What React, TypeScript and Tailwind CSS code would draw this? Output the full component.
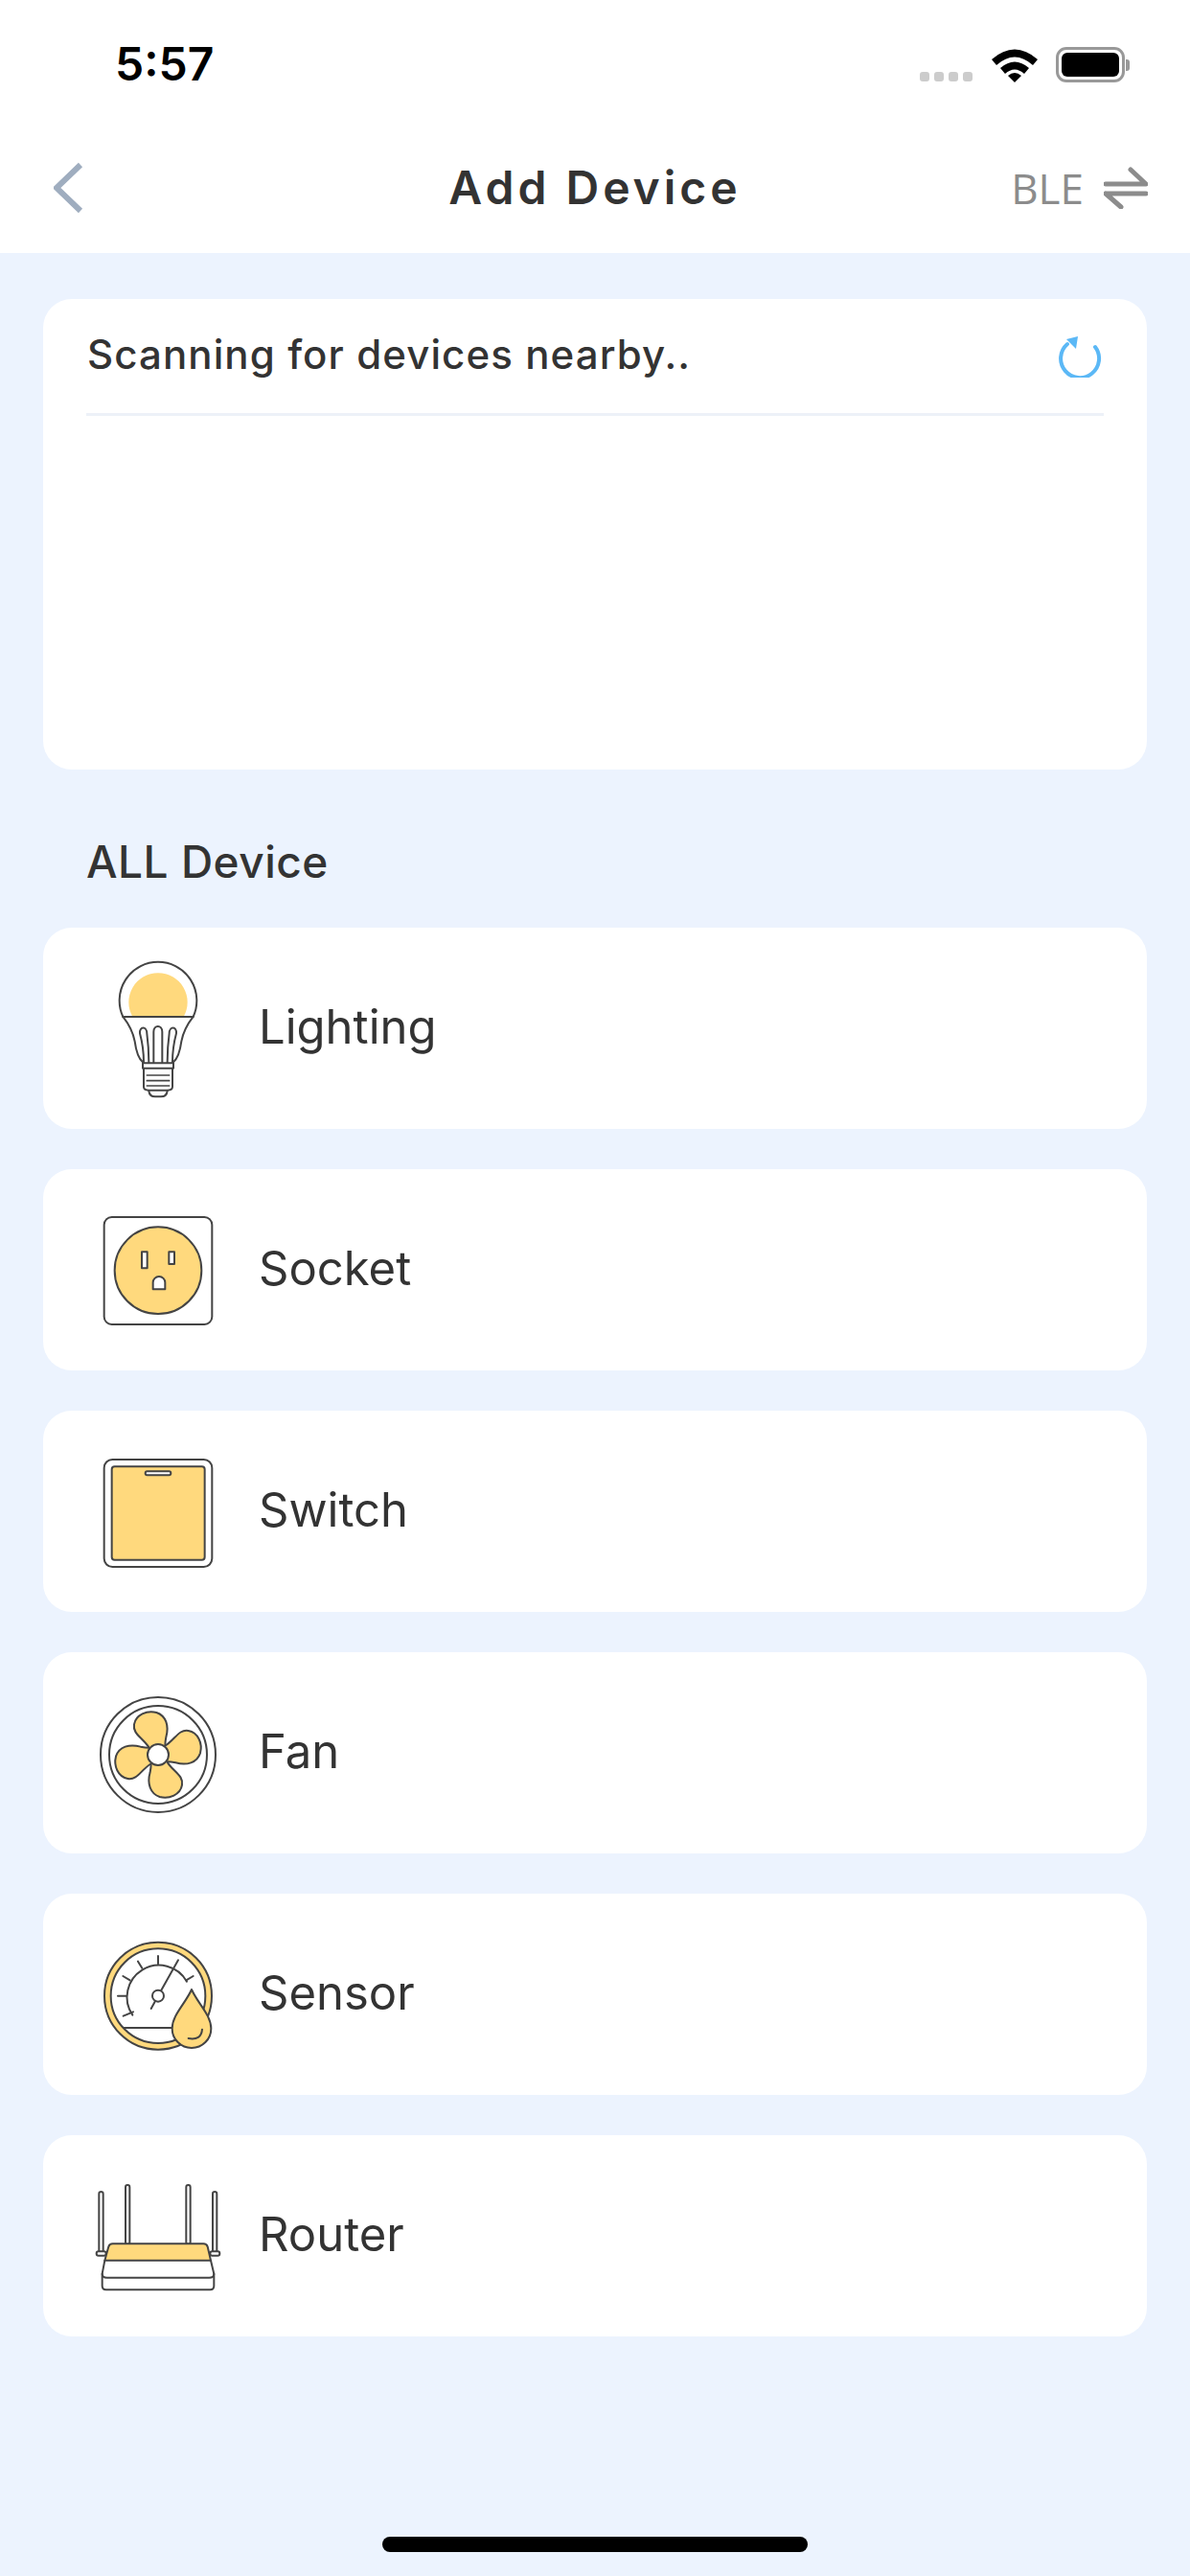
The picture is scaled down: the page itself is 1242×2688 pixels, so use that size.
import type { ReactNode } from "react";

const INK = "#444444";
const YELLOW = "#ffd97d";

function IconShell({ dx, dy, children }: { dx: number; dy: number; children: ReactNode }) {
  return (
    <svg width="180" height="180" viewBox="0 0 180 180" className="shrink-0">
      <g
        transform={`translate(${dx} ${dy}) scale(0.3333)`}
        fill="none"
        stroke={INK}
        strokeWidth="6"
        strokeLinecap="round"
        strokeLinejoin="round"
      >
        {children}
      </g>
    </svg>
  );
}

function BulbIcon() {
  return (
    <IconShell dx={0} dy={-3}>
      <path d="M205 243 A92 92 0 1 1 365 243 Z" fill={YELLOW} stroke="none" />
      <path d="M175 243 A121 121 0 1 1 395 243 Z" />
      <path d="M175 243 C190 262 205 285 212 320 C216 350 222 372 237 385" />
      <path d="M395 243 C380 262 365 285 358 320 C354 350 348 372 333 385" />
      <path d="M240 385 C240 350 236 325 228 295 C226 272 250 272 250 295 C254 325 256 350 256 385" />
      <path d="M271 385 L271 290 C271 267 298 267 298 290 L298 385" />
      <path d="M330 385 C330 350 334 325 342 295 C344 272 320 272 320 295 C316 325 314 350 314 385" />
      <path d="M237 388 L333 388 L333 404 L237 404 Z" strokeWidth="6" />
      <path d="M240 404 L240 462 Q240 473 256 473 L314 473 Q330 473 330 462 L330 404" />
      <path d="M250 426 L320 426 M250 443 L320 443 M250 459 L320 459" strokeWidth="5" />
      <path d="M256 475 Q258 493 276 493 L294 493 Q312 493 314 475" />
    </IconShell>
  );
}

function SocketIcon() {
  return (
    <IconShell dx={10} dy={5}>
      <rect x="86" y="90" width="338" height="336" rx="24" />
      <circle cx="255" cy="257" r="136" fill={YELLOW} />
      <rect x="204" y="199" width="17" height="51" fill="#fff" />
      <rect x="289" y="199" width="17" height="38" fill="#fff" />
      <path d="M239 316 L239 295 A19 19 0 0 1 277 295 L277 316 Z" fill="#fff" />
    </IconShell>
  );
}

function SwitchIcon() {
  return (
    <IconShell dx={10} dy={4}>
      <rect x="86" y="96" width="338" height="336" rx="26" />
      <rect x="110" y="118" width="291" height="292" rx="9" fill={YELLOW} />
      <rect x="215" y="133" width="80" height="12" rx="6" fill="#fff" />
    </IconShell>
  );
}

function FanIcon() {
  const blade =
    "M210 215 C190 185 160 175 165 145 C170 115 205 100 235 108 C265 118 275 150 265 185 C262 200 262 205 262 212";
  return (
    <IconShell dx={15} dy={12}>
      <circle cx="240" cy="240" r="180" />
      <circle cx="240" cy="240" r="153" />
      <path d={blade} fill={YELLOW} />
      <path d={blade} fill={YELLOW} transform="rotate(90 240 240)" />
      <path d={blade} fill={YELLOW} transform="rotate(180 240 240)" />
      <path d={blade} fill={YELLOW} transform="rotate(270 240 240)" />
      <circle cx="240" cy="240" r="33" fill="#fff" />
    </IconShell>
  );
}

function SensorIcon() {
  return (
    <IconShell dx={15} dy={10}>
      <circle cx="240" cy="245" r="168" fill={YELLOW} />
      <circle cx="240" cy="245" r="148" fill="#fff" />
      <path d="M160 305 A100 100 0 1 1 330 200" />
      <path d="M240 120 L240 145 M177 137 L190 158 M130 183 L152 196 M114 245 L140 245 M131 308 L162 295 M350 183 L328 196" />
      <path d="M218 285 L230 263 M250 227 L303 133" />
      <circle cx="240" cy="245" r="18" />
      <path d="M132 345 L290 345" />
      <path d="M345 225 C325 270 284 305 284 347 A61 61 0 0 0 406 347 C406 305 365 270 345 225 Z" fill={YELLOW} />
      <path d="M335 378 Q375 385 378 350" />
    </IconShell>
  );
}

function RouterIcon() {
  return (
    <IconShell dx={15} dy={18}>
      <rect x="55" y="78" width="13" height="190" rx="6.5" />
      <rect x="138" y="57" width="13" height="186" rx="6.5" />
      <rect x="328" y="57" width="13" height="186" rx="6.5" />
      <rect x="411" y="78" width="13" height="190" rx="6.5" />
      <rect x="47" y="265" width="30" height="13" rx="6.5" fill="#fff" />
      <rect x="403" y="265" width="30" height="13" rx="6.5" fill="#fff" />
      <path d="M73 293 L65 335 L65 373 Q65 385 77 385 L403 385 Q415 385 415 373 L415 335 L405 293" fill="#fff" />
      <path d="M65 335 Q65 347 80 347 L400 347 Q415 347 415 335" />
      <path d="M73 293 L85 250 Q88 241 98 241 L382 241 Q392 241 395 250 L405 293 Z" fill={YELLOW} />
    </IconShell>
  );
}

const devices = [
  { name: "Lighting", icon: <BulbIcon /> },
  { name: "Socket", icon: <SocketIcon /> },
  { name: "Switch", icon: <SwitchIcon /> },
  { name: "Fan", icon: <FanIcon /> },
  { name: "Sensor", icon: <SensorIcon /> },
  { name: "Router", icon: <RouterIcon /> },
];

function StatusBar() {
  return (
    <div className="flex h-[132px] items-start justify-between pl-[120px] pr-[63px]">
      <span className="mt-[39px] text-[48px] leading-[56px] font-semibold text-black [font-family:Inter,sans-serif]">
        5:57
      </span>
      <div className="mt-[49px] flex items-end">
        <div className="mb-[1px] flex gap-[5px]">
          <div className="h-[10px] w-[10px] rounded-[3px] bg-[#cccccc]" />
          <div className="h-[10px] w-[10px] rounded-[3px] bg-[#cccccc]" />
          <div className="h-[10px] w-[10px] rounded-[3px] bg-[#cccccc]" />
          <div className="h-[10px] w-[10px] rounded-[3px] bg-[#cccccc]" />
        </div>
        <svg width="48" height="36" viewBox="0 0 48 36" className="ml-[20px]">
          <path d="M0 12 Q24 -9 48 12 L43 18 Q24 1 5 18 Z" fill="#000" />
          <path d="M9 21 Q24 8 39 21 L34 27 Q24 18 14 27 Z" fill="#000" />
          <path d="M17 29 Q24 23 31 29 L24 36 Z" fill="#000" />
        </svg>
        <div className="ml-[19px] flex items-center">
          <div className="flex h-[37px] w-[72px] rounded-[11px] border-[3px] border-[#999999] p-[3px]">
            <div className="flex-1 rounded-[6px] bg-black" />
          </div>
          <div className="ml-[1px] h-[12px] w-[4px] rounded-r-[3px] bg-[#999999]" />
        </div>
      </div>
    </div>
  );
}

function Header() {
  return (
    <div className="grid h-[132px] grid-cols-3 items-center pb-[4px] pl-[56px] pr-[44px]">
      <svg width="32" height="54" viewBox="0 0 32 54">
        <path d="M29 3 L4 27 L29 51" fill="none" stroke="#9fadbf" strokeWidth="6" transform="translate(-1 0)" />
      </svg>
      <span className="justify-self-center whitespace-nowrap pr-[12px] text-[48px] leading-[56px] font-semibold tracking-[4px] text-[#333333] [font-family:Inter,sans-serif]">
        Add Device
      </span>
      <div className="flex items-center justify-end gap-[21px]">
        <span className="text-[44px] leading-[56px] text-[#8c8c8c] [font-family:'Open_Sans',sans-serif]">BLE</span>
        <svg width="46" height="44" viewBox="0 0 46 44">
          <path
            d="M2 18 L44 18 L28 3 M2 28 L44 28 M2 28 L18 42"
            fill="none"
            stroke="#8c8c8c"
            strokeWidth="5"
            strokeLinecap="round"
            strokeLinejoin="round"
          />
        </svg>
      </div>
    </div>
  );
}

export default function App() {
  return (
    <div className="flex h-[2688px] w-[1242px] flex-col overflow-hidden bg-[#ecf3fe] [font-family:Inter,sans-serif]">
      <div className="bg-white">
        <StatusBar />
        <Header />
      </div>

      <div className="px-[45px] pt-[48px]">
        {/* Scan card */}
        <div className="h-[491px] rounded-[30px] bg-white px-[45px] pt-[30px]">
          <div className="flex h-[92px] items-center justify-between border-b-[3px] border-[#edf1f8] pb-[34px] pl-[1px] pr-[1px]">
            <span className="text-[42px] leading-[56px] font-[450] tracking-[1.1px] text-[#333333]">
              Scanning for devices nearby..
            </span>
            <svg width="46" height="46" viewBox="0 0 46 46" className="mt-[2px]">
              <path d="M38 14 A20 20 0 1 1 9 11" fill="none" stroke="#5bb8f6" strokeWidth="4" strokeLinecap="round" />
              <path d="M8 6 L20 3 L18 16 Z" fill="#5bb8f6" />
            </svg>
          </div>
        </div>

        <h2 className="mt-[66px] ml-[45px] text-[46px] leading-[60px] font-medium tracking-[0.5px] text-[#333333]">
          ALL Device
        </h2>

        {/* Device list */}
        <div className="mt-[39px] flex flex-col gap-[42px]">
          {devices.map((d) => (
            <div key={d.name} className="flex h-[210px] items-center rounded-[30px] bg-white pl-[25px]">
              {d.icon}
              <span className="mb-[3px] ml-[20px] text-[49px] leading-[60px] text-[#333333]">{d.name}</span>
            </div>
          ))}
        </div>
      </div>

      {/* Home indicator */}
      <div className="mt-auto mb-[25px] flex justify-center">
        <div className="h-[16px] w-[444px] rounded-full bg-black" />
      </div>
    </div>
  );
}
